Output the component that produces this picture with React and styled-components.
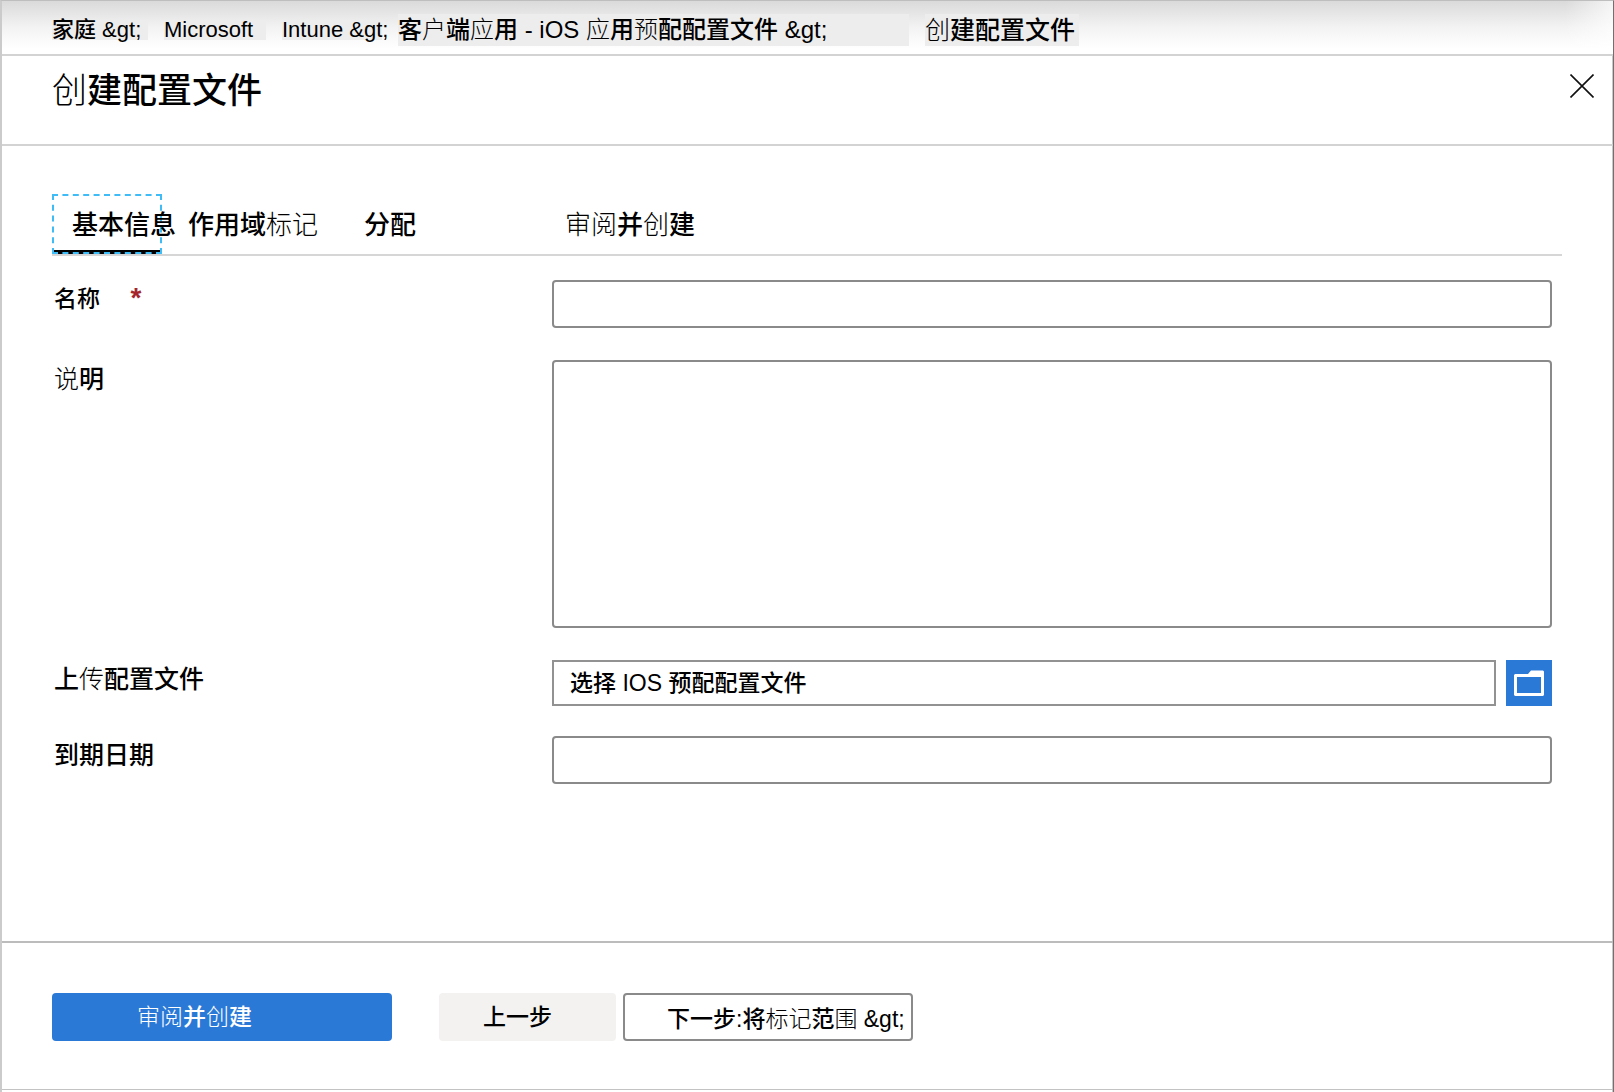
import React, { useState } from "react";
import styled, { createGlobalStyle } from "styled-components";

const crumbs = [
  { label: "家庭 &gt;", size: 22, width: 96, height: 20 },
  { label: "Microsoft", size: 22, width: 102, height: 20 },
  { label: "Intune &gt;", size: 22, width: 100, height: 20 },
  { label: "客户端应用 - iOS 应用预配配置文件 &gt;", size: 24, width: 511, height: 32 },
  { label: "创建配置文件", size: 25, width: 154, height: 32 },
];

const tabs = [
  { id: "basics", label: "基本信息", width: 110 },
  { id: "scope", label: "作用域标记", width: 170 },
  { id: "assign", label: "分配", width: 195 },
  { id: "review", label: "审阅并创建", width: 170 },
];

const lightChars = /([户应预创标记审阅说传围]+)/;

function MixedText({ children }) {
  return children
    .split(lightChars)
    .map((part, i) => (i % 2 ? <Light key={i}>{part}</Light> : part));
}

function App() {
  const [activeTab, setActiveTab] = useState("basics");
  const [name, setName] = useState("");
  const [description, setDescription] = useState("");
  const [file, setFile] = useState("");
  const [expiry, setExpiry] = useState("");

  return (
    <>
      <GlobalStyle />
      <Page>
        <Breadcrumb aria-label="breadcrumb">
          {crumbs.map((c) => (
            <Crumb key={c.label} href="#" $size={c.size} $width={c.width} $height={c.height}>
              <MixedText>{c.label}</MixedText>
            </Crumb>
          ))}
        </Breadcrumb>
        <Header>
          <Title>
            <MixedText>创建配置文件</MixedText>
          </Title>
          <CloseButton type="button" aria-label="关闭">
            <svg width="24" height="24" viewBox="0 0 24 24">
              <path d="M0.5 0.5L23.5 23.5M23.5 0.5L0.5 23.5" stroke="#111" strokeWidth="1.6" />
            </svg>
          </CloseButton>
        </Header>
        <Content>
          <TabList role="tablist">
            {tabs.map((t) => (
              <Tab
                key={t.id}
                type="button"
                role="tab"
                aria-selected={activeTab === t.id}
                $active={activeTab === t.id}
                $width={t.width}
                onClick={() => setActiveTab(t.id)}
              >
                <MixedText>{t.label}</MixedText>
              </Tab>
            ))}
          </TabList>
          <Form>
            <Row>
              <Label htmlFor="name" $size={23}>
                名称 <Required>*</Required>
              </Label>
              <TextInput id="name" value={name} onChange={(e) => setName(e.target.value)} />
            </Row>
            <Row>
              <Label htmlFor="description">
                <MixedText>说明</MixedText>
              </Label>
              <TextArea
                id="description"
                value={description}
                onChange={(e) => setDescription(e.target.value)}
              />
            </Row>
            <Row $gap={30}>
              <Label htmlFor="file">
                <MixedText>上传配置文件</MixedText>
              </Label>
              <FilePicker>
                <FileInput
                  id="file"
                  placeholder="选择 IOS 预配配置文件"
                  value={file}
                  onChange={(e) => setFile(e.target.value)}
                />
                <BrowseButton type="button" aria-label="浏览">
                  <svg width="30" height="26" viewBox="0 0 30 26">
                    <path
                      fill="#fff"
                      fillRule="evenodd"
                      d="M1 4H14L17 0.5H29L30 1.5V25L29 26H1L0 25V5ZM3 7V23H27V7Z"
                    />
                  </svg>
                </BrowseButton>
              </FilePicker>
            </Row>
            <Row>
              <Label htmlFor="expiry">到期日期</Label>
              <TextInput id="expiry" value={expiry} onChange={(e) => setExpiry(e.target.value)} />
            </Row>
          </Form>
        </Content>
        <Footer>
          <PrimaryButton type="button">
            <MixedText>审阅并创建</MixedText>
          </PrimaryButton>
          <StepButtons>
            <PreviousButton type="button">上一步</PreviousButton>
            <NextButton type="button">
              <MixedText>{"下一步:将标记范围 &gt;"}</MixedText>
            </NextButton>
          </StepButtons>
        </Footer>
      </Page>
    </>
  );
}

const GlobalStyle = createGlobalStyle`
  * {
    box-sizing: border-box;
  }
  body {
    margin: 0;
    background: #fff;
    color: #000;
  }
  body, button, input, textarea {
    font-family: "Liberation Sans", "Noto Sans CJK SC", sans-serif;
    font-weight: 500;
  }
`;

const Light = styled.span`
  font-weight: 300;
`;

const Page = styled.div`
  display: flex;
  flex-direction: column;
  min-height: 100vh;
  padding-bottom: 2px;
  border-top: 1px solid #bebebe;
  border-left: 2px solid #cbcbcb;
  border-right: 1px solid #707070;
  box-shadow: inset -1px 0 0 #c8c8c8;
`;

const Breadcrumb = styled.nav`
  display: flex;
  align-items: center;
  gap: 16px;
  height: 55px;
  padding: 4px 50px 0;
  border-bottom: 2px solid #d3d3d3;
  background: linear-gradient(to right, transparent calc(100% - 48px), rgba(255, 255, 255, 0.7)),
    linear-gradient(#dadada, #f3f3f3 50%, #fff 90%);
`;

const Crumb = styled.a`
  flex: 0 0 ${(props) => props.$width}px;
  min-width: 0;
  height: ${(props) => props.$height}px;
  line-height: ${(props) => props.$height}px;
  font-size: ${(props) => props.$size}px;
  color: #000;
  text-decoration: none;
  white-space: nowrap;
  background: #ededed;
`;

const Header = styled.header`
  display: flex;
  justify-content: space-between;
  align-items: flex-start;
  height: 90px;
  padding: 12px 13px 0 50px;
  border-bottom: 2px solid #d3d3d3;
`;

const Title = styled.h1`
  margin: 0;
  font-size: 35px;
  font-weight: 500;
  line-height: 46px;
`;

const CloseButton = styled.button`
  display: flex;
  align-items: center;
  justify-content: center;
  width: 36px;
  height: 36px;
  padding: 0;
  border: none;
  background: none;
  cursor: pointer;
`;

const Content = styled.main`
  flex: 1;
  padding: 48px 51px 48px 50px;
`;

const TabList = styled.div`
  display: flex;
  gap: 6px;
  border-bottom: 2px solid #d6d6d6;
`;

const Tab = styled.button`
  flex: 0 0 ${(props) => props.$width}px;
  min-width: 0;
  width: ${(props) => props.$width}px;
  height: 60px;
  padding: 0 0 4px 18px;
  border: 2px dashed ${(props) => (props.$active ? "#3fbcf5" : "transparent")};
  background: ${(props) =>
    props.$active ? "linear-gradient(#000, #000) bottom / 100% 4px no-repeat border-box" : "none"};
  color: #000;
  font-size: 26px;
  text-align: left;
  white-space: nowrap;
  cursor: pointer;
`;

const Form = styled.form`
  padding: 24px 10px 0 0;
`;

const Row = styled.div`
  display: flex;
  align-items: flex-start;
  margin-bottom: ${(props) => props.$gap || 32}px;
`;

const Label = styled.label`
  flex: 0 0 500px;
  padding-left: 2px;
  font-size: ${(props) => props.$size || 25}px;
  line-height: 38px;
`;

const Required = styled.span`
  margin-left: 24px;
  color: #a4262c;
  font-size: 28px;
  font-weight: 700;
  line-height: 1;
`;

const TextInput = styled.input`
  flex: 1;
  min-width: 0;
  height: 48px;
  padding: 0 16px;
  border: 2px solid #8a8a8a;
  border-radius: 4px;
  background: #fff;
  font-size: 23px;
`;

const TextArea = styled.textarea`
  flex: 1;
  min-width: 0;
  height: 268px;
  padding: 8px 16px;
  border: 2px solid #8a8a8a;
  border-radius: 4px;
  background: #fff;
  font-size: 23px;
  resize: none;
`;

const FilePicker = styled.div`
  display: flex;
  flex: 1;
  gap: 10px;
`;

const FileInput = styled(TextInput)`
  height: 46px;
  border-color: #929292;
  border-radius: 0;
  &::placeholder {
    color: #000;
    opacity: 1;
  }
`;

const BrowseButton = styled.button`
  display: flex;
  align-items: center;
  justify-content: center;
  width: 46px;
  height: 46px;
  padding: 0;
  border: none;
  background: #2b79d7;
  cursor: pointer;
`;

const Footer = styled.footer`
  display: flex;
  gap: 47px;
  padding: 50px 50px 48px;
  border-top: 2px solid #bcbcbc;
  border-bottom: 1px solid #c3c3c3;
`;

const StepButtons = styled.div`
  display: flex;
  gap: 7px;
`;

const Button = styled.button`
  height: 48px;
  border: none;
  border-radius: 4px;
  color: #000;
  font-size: 23px;
  text-align: left;
  white-space: nowrap;
  cursor: pointer;
`;

const PrimaryButton = styled(Button)`
  width: 340px;
  padding: 0 0 4px 85px;
  background: #2b79d7;
  color: #fff;
`;

const PreviousButton = styled(Button)`
  width: 177px;
  padding: 0 0 4px 44px;
  background: #f3f2f1;
`;

const NextButton = styled(Button)`
  width: 290px;
  padding: 0 0 0 42px;
  border: 2px solid #8a8a8a;
  background: #fff;
`;

export default App;
